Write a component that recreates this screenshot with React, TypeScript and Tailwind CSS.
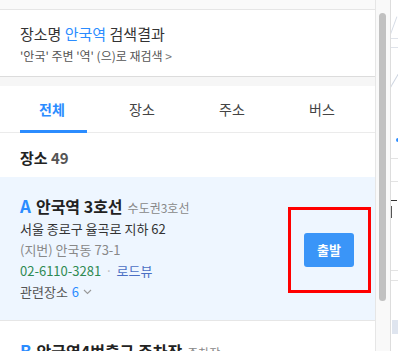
import React from 'react'

const font = { fontFamily: '"Noto Sans CJK KR", "Noto Sans", sans-serif' }

function Tabs() {
  const tabs = ['전체', '장소', '주소', '버스']
  return (
    <div className="flex h-[47px] shrink-0 border-b border-[#ebebeb] pl-[7px]">
      {tabs.map((t, i) => (
        <div key={t} className="relative flex w-[90px] items-center justify-center pt-[1px]">
          <span
            className={
              i === 0
                ? 'text-[14px] font-bold text-[#2b8cff]'
                : 'text-[14px] text-[#444]'
            }
          >
            {t}
          </span>
          {i === 0 && (
            <div className="absolute bottom-[-1px] left-[13px] right-[10px] h-[3px] bg-[#2b8cff]" />
          )}
        </div>
      ))}
    </div>
  )
}

export default function App() {
  return (
    <div className="flex h-[351px] w-[398px] overflow-hidden bg-white" style={font}>
      {/* list panel */}
      <div className="flex w-[376px] flex-col overflow-hidden border-r border-[#e6e6e6]">
        <div className="h-[10px] shrink-0 border-b border-[#e6e6e6] bg-[#fafafa]" />
        <div className="flex h-[67px] shrink-0 flex-col justify-center border-b border-[#dcdcdc] px-5 pt-[1px]">
          <p className="text-[15px] leading-[20px] text-[#333]">
            장소명 <span className="text-[#2b8cff]">안국역</span> 검색결과
          </p>
          <p className="mt-[4px] text-[12px] leading-[16px] text-[#555]">
            '안국' 주변 '역' (으)로 재검색{' '}
            <span className="text-[#777]">&gt;</span>
          </p>
        </div>
        <div className="h-[9px] shrink-0 bg-[#f6f6f6]" />
        <Tabs />
        <div className="flex h-[44px] shrink-0 items-center px-5 pt-[6px]">
          <p className="text-[15px] font-bold text-[#222]">
            장소 <span className="text-[#555]">49</span>
          </p>
        </div>
        <div className="relative flex h-[144px] shrink-0 items-center border-b border-[#e6e6e6] bg-[#eef6ff] px-5">
          <div className="flex-1">
            <div className="flex items-baseline gap-[5px]">
              <span className="text-[17px] font-bold leading-[22px] text-[#2b8cff]">A</span>
              <span className="text-[16px] font-bold leading-[22px] text-[#222]">안국역 3호선</span>
              <span className="text-[12px] text-[#888]">수도권3호선</span>
            </div>
            <p className="mt-[2px] text-[13px] leading-[20px] text-[#333]">서울 종로구 율곡로 지하 62</p>
            <p className="mt-[1px] text-[13px] leading-[20px] text-[#888]">(지번) 안국동 73-1</p>
            <p className="mt-[1px] text-[13px] leading-[20px]">
              <span className="text-[#2f8a52]">02-6110-3281</span>
              <span className="mx-[4px] text-[#bbb]">·</span>
              <span className="text-[#4b6fc4]">로드뷰</span>
            </p>
            <p className="mt-[1px] flex items-center text-[13px] leading-[20px] text-[#555]">
              관련장소 <span className="ml-[4px] text-[#2b8cff]">6</span>
              <svg className="ml-[4px]" width="9" height="6" viewBox="0 0 9 6" fill="none">
                <path d="M1 1l3.5 3.5L8 1" stroke="#999" strokeWidth="1.1" />
              </svg>
            </p>
          </div>
          <button className="mr-[1px] mt-[2px] h-[34px] w-[50px] rounded-[3px] bg-[#3a95f8] text-[13px] font-bold text-white">
            출발
          </button>
          <div className="pointer-events-none absolute left-[288px] top-[30px] h-[86px] w-[83px] border-[3px] border-[#ff0000]" />
        </div>
        <div className="flex shrink-0 items-center px-5 pt-[19px]">
          <div className="flex items-baseline gap-[5px]">
            <span className="text-[17px] font-bold leading-[22px] text-[#2b8cff]">B</span>
            <span className="text-[16px] font-bold leading-[22px] text-[#222]">안국역4번출구 주차장</span>
            <span className="text-[12px] text-[#888]">주차장</span>
          </div>
        </div>
      </div>
      {/* scrollbar */}
      <div className="flex w-[14px] flex-col bg-[#f9f9f9] px-[3px] pt-[13px]">
        <div className="h-[288px] w-[7px] rounded-full bg-[#c1c1c1]" />
      </div>
      {/* map edge */}
      <div className="relative flex-1 overflow-hidden border-l border-[#dddddd] bg-white">
        <div className="absolute left-[2px] top-[16px] h-[20px] w-[1px] rotate-[20deg] bg-[#d6dce6]" />
        <div className="absolute left-0 top-[38px] h-[10px] w-full border-y border-[#dfe3ea]" />
        <div className="absolute left-[1px] top-[72px] h-[24px] w-[1px] rotate-[30deg] bg-[#cfd6e1]" />
        <div className="absolute left-[5px] top-[138px] h-[4px] w-[4px] rounded-full bg-[#2b8cff]" />
        <div className="absolute left-0 top-[158px] h-[24px] w-full border-y border-[#e3e3e3]" />
        <div className="absolute left-0 top-[191px] h-[10px] w-[6px] border-b border-[#333]" />
        <div className="absolute left-0 top-[206px] h-[12px] w-[3px] border-l border-[#555]" />
        <div className="absolute left-0 top-[270px] h-[1px] w-full bg-[#e3e3e3]" />
        <div className="absolute left-0 top-[280px] h-[1px] w-full bg-[#e3e3e3]" />
        <div className="absolute left-[1px] top-[320px] h-[14px] w-[6px] bg-[#dfe5ef]" />
      </div>
    </div>
  )
}
